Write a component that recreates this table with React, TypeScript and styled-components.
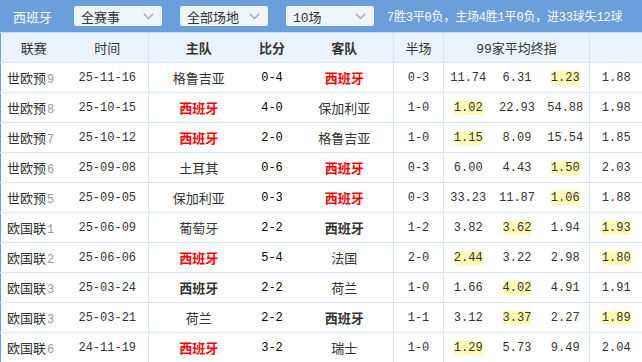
import React from 'react';
import styled, { createGlobalStyle } from 'styled-components';

const GlobalStyle = createGlobalStyle`
  body {
    margin: 0;
    background: #ffffff;
    font-family: 'Liberation Mono', 'Noto Sans CJK SC', monospace;
  }
`;

const Page = styled.div`
  width: 642px;
  height: 362px;
  overflow: hidden;
  background: #ffffff;
`;

const TopBar = styled.div`
  height: 32px;
  background: #6a9fdb;
  display: flex;
  align-items: center;
  padding-left: 13px;
  border-bottom: 1px solid #c9dcf2;
`;

const Title = styled.div`
  width: 61px;
  color: #ffffff;
  font-size: 13px;
`;

const Select = styled.div`
  width: 88px;
  height: 20px;
  margin-right: 18px;
  box-sizing: border-box;
  padding: 0 8px 0 7px;
  background: #eef5fd;
  border-radius: 2px;
  display: flex;
  align-items: center;
  justify-content: space-between;
  color: #333333;
  font-size: 13px;
  svg {
    flex-shrink: 0;
  }
`;

const Summary = styled.div`
  color: #ffffff;
  font-size: 12px;
  letter-spacing: -0.2px;
  white-space: nowrap;
  margin-left: -5px;
`;

const Table = styled.table`
  width: 642px;
  table-layout: fixed;
  border-collapse: collapse;
  border-left: 1px solid #6a9fdb;
`;

const HeadRow = styled.tr`
  background: #ebf4fe;
`;

const Th = styled.th<{ $bold?: boolean; $line?: boolean }>`
  height: 29px;
  padding: 0;
  font-size: 13px;
  font-weight: ${p => (p.$bold ? 'bold' : 'normal')};
  color: #333333;
  text-align: center;
  border-bottom: 1px solid #d6e4f4;
  border-right: ${p => (p.$line ? '1px solid #d6e4f4' : 'none')};
  white-space: nowrap;
`;

const Td = styled.td<{ $line?: boolean; $num?: boolean }>`
  height: 29px;
  padding: 0;
  text-align: center;
  font-size: ${p => (p.$num ? '12px' : '13px')};
  color: #333333;
  border-bottom: 1px solid #d6e4f4;
  border-right: ${p => (p.$line ? '1px solid #d6e4f4' : 'none')};
  white-space: nowrap;
`;

const LeagueCell = styled(Td)`
  text-align: left;
  padding-left: 6px;
`;

const Round = styled.span`
  color: #999999;
  font-size: 12px;
  margin-left: 1px;
`;

const Score = styled(Td)`
  color: #000000;
`;

const Team = styled.span<{ $kind: 'red' | 'bold' | 'plain' }>`
  color: ${p => (p.$kind === 'red' ? '#ff0000' : '#333333')};
  font-weight: ${p => (p.$kind === 'plain' ? 'normal' : 'bold')};
`;

const Odd = styled.span<{ $hot?: boolean }>`
  background: ${p => (p.$hot ? '#fffab3' : 'transparent')};
`;

const Chevron = () => (
  <svg width="11" height="7" viewBox="0 0 11 7">
    <path d="M0.8 0.8 L5.5 5.6 L10.2 0.8" fill="none" stroke="#a8a8a8" strokeWidth="1.4" />
  </svg>
);

type Side = 'red' | 'bold' | 'plain';

interface Match {
  league: string;
  round: string;
  date: string;
  home: string;
  homeKind: Side;
  score: string;
  away: string;
  awayKind: Side;
  half: string;
  odds: string[];
  hot: number[];
}

const ESP = '西班牙';

const matches: Match[] = [
  { league: '世欧预', round: '9', date: '25-11-16', home: '格鲁吉亚', homeKind: 'plain', score: '0-4', away: ESP, awayKind: 'red', half: '0-3', odds: ['11.74', '6.31', '1.23', '1.88'], hot: [2] },
  { league: '世欧预', round: '8', date: '25-10-15', home: ESP, homeKind: 'red', score: '4-0', away: '保加利亚', awayKind: 'plain', half: '1-0', odds: ['1.02', '22.93', '54.88', '1.98'], hot: [0] },
  { league: '世欧预', round: '7', date: '25-10-12', home: ESP, homeKind: 'red', score: '2-0', away: '格鲁吉亚', awayKind: 'plain', half: '1-0', odds: ['1.15', '8.09', '15.54', '1.85'], hot: [0] },
  { league: '世欧预', round: '6', date: '25-09-08', home: '土耳其', homeKind: 'plain', score: '0-6', away: ESP, awayKind: 'red', half: '0-3', odds: ['6.00', '4.43', '1.50', '2.03'], hot: [2] },
  { league: '世欧预', round: '5', date: '25-09-05', home: '保加利亚', homeKind: 'plain', score: '0-3', away: ESP, awayKind: 'red', half: '0-3', odds: ['33.23', '11.87', '1.06', '1.88'], hot: [2] },
  { league: '欧国联', round: '1', date: '25-06-09', home: '葡萄牙', homeKind: 'plain', score: '2-2', away: ESP, awayKind: 'bold', half: '1-2', odds: ['3.82', '3.62', '1.94', '1.93'], hot: [1, 3] },
  { league: '欧国联', round: '2', date: '25-06-06', home: ESP, homeKind: 'red', score: '5-4', away: '法国', awayKind: 'plain', half: '2-0', odds: ['2.44', '3.22', '2.98', '1.80'], hot: [0, 3] },
  { league: '欧国联', round: '3', date: '25-03-24', home: ESP, homeKind: 'bold', score: '2-2', away: '荷兰', awayKind: 'plain', half: '1-0', odds: ['1.66', '4.02', '4.91', '1.91'], hot: [1] },
  { league: '欧国联', round: '3', date: '25-03-21', home: '荷兰', homeKind: 'plain', score: '2-2', away: ESP, awayKind: 'bold', half: '1-1', odds: ['3.12', '3.37', '2.27', '1.89'], hot: [1, 3] },
  { league: '欧国联', round: '6', date: '24-11-19', home: ESP, homeKind: 'red', score: '3-2', away: '瑞士', awayKind: 'plain', half: '1-0', odds: ['1.29', '5.73', '9.49', '2.04'], hot: [0] },
];

export default function App() {
  return (
    <Page>
      <GlobalStyle />
      <TopBar>
        <Title>西班牙</Title>
        <Select>
          全赛事
          <Chevron />
        </Select>
        <Select>
          全部场地
          <Chevron />
        </Select>
        <Select>
          10场
          <Chevron />
        </Select>
        <Summary>7胜3平0负，主场4胜1平0负，进33球失12球</Summary>
      </TopBar>
      <Table>
        <colgroup>
          <col style={{ width: 66 }} />
          <col style={{ width: 82 }} />
          <col style={{ width: 100 }} />
          <col style={{ width: 47 }} />
          <col style={{ width: 98 }} />
          <col style={{ width: 50 }} />
          <col style={{ width: 49 }} />
          <col style={{ width: 49 }} />
          <col style={{ width: 48 }} />
          <col style={{ width: 53 }} />
        </colgroup>
        <thead>
          <HeadRow>
            <Th>联赛</Th>
            <Th $line>时间</Th>
            <Th $bold>主队</Th>
            <Th $bold>比分</Th>
            <Th $bold $line>客队</Th>
            <Th $line>半场</Th>
            <Th colSpan={3} $line>99家平均终指</Th>
            <Th />
          </HeadRow>
        </thead>
        <tbody>
          {matches.map((m, i) => (
            <tr key={i}>
              <LeagueCell>
                {m.league}
                <Round>{m.round}</Round>
              </LeagueCell>
              <Td $num $line>{m.date}</Td>
              <Td>
                <Team $kind={m.homeKind}>{m.home}</Team>
              </Td>
              <Score $num>{m.score}</Score>
              <Td $line>
                <Team $kind={m.awayKind}>{m.away}</Team>
              </Td>
              <Td $num $line>{m.half}</Td>
              {m.odds.map((o, j) => (
                <Td key={j} $num $line={j === 2}>
                  <Odd $hot={m.hot.includes(j)}>{o}</Odd>
                </Td>
              ))}
            </tr>
          ))}
        </tbody>
      </Table>
    </Page>
  );
}
